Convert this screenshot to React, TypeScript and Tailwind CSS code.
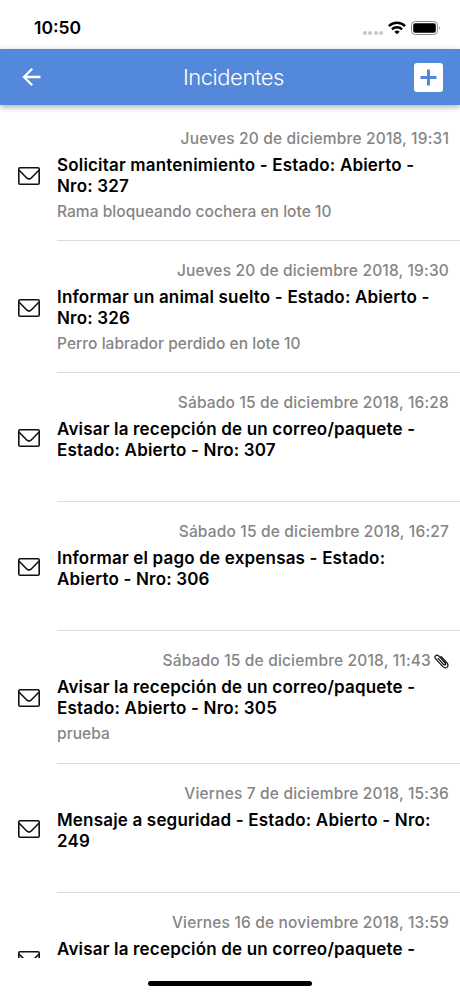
type Incident = {
  date: string;
  title: string[];
  detail?: string;
  attachment?: boolean;
  height: string;
};

const incidents: Incident[] = [
  {
    date: 'Jueves 20 de diciembre 2018, 19:31',
    title: ['Solicitar mantenimiento - Estado: Abierto -', 'Nro: 327'],
    detail: 'Rama bloqueando cochera en lote 10',
    height: 'h-[132px]',
  },
  {
    date: 'Jueves 20 de diciembre 2018, 19:30',
    title: ['Informar un animal suelto - Estado: Abierto -', 'Nro: 326'],
    detail: 'Perro labrador perdido en lote 10',
    height: 'h-[132px]',
  },
  {
    date: 'Sábado 15 de diciembre 2018, 16:28',
    title: ['Avisar la recepción de un correo/paquete -', 'Estado: Abierto - Nro: 307'],
    height: 'h-[129px]',
  },
  {
    date: 'Sábado 15 de diciembre 2018, 16:27',
    title: ['Informar el pago de expensas - Estado:', 'Abierto - Nro: 306'],
    height: 'h-[129px]',
  },
  {
    date: 'Sábado 15 de diciembre 2018, 11:43',
    title: ['Avisar la recepción de un correo/paquete -', 'Estado: Abierto - Nro: 305'],
    detail: 'prueba',
    attachment: true,
    height: 'h-[133px]',
  },
  {
    date: 'Viernes 7 de diciembre 2018, 15:36',
    title: ['Mensaje a seguridad - Estado: Abierto - Nro:', '249'],
    height: 'h-[129px]',
  },
  {
    date: 'Viernes 16 de noviembre 2018, 13:59',
    title: ['Avisar la recepción de un correo/paquete -'],
    height: 'h-[133px]',
  },
];

const MailIcon = () => (
  <svg width="22" height="18" viewBox="0 0 22 18" fill="none" stroke="#111" strokeWidth="1.6" strokeLinejoin="round">
    <rect x="0.8" y="0.8" width="20.4" height="16.4" rx="1.3" />
    <path d="M1.2 3.2 9 11.2q2 1.7 4 0L20.8 3.2" />
  </svg>
);

const ClipIcon = () => (
  <svg width="15" height="16" viewBox="0 0 15 16" fill="none" stroke="#111" strokeWidth="1.25" strokeLinecap="round">
    <path d="M4.1 5.3 9.5 11.3c1.4 1.4 2.9.1 1.7-1.3L4.9 3.1C2.6.8-.5 3.4 1.7 5.9l6.9 7.5c3.3 3.2 7.3-.1 4.4-3.5L7 3.4" />
  </svg>
);

const StatusBar = () => (
  <div className="flex h-[49px] shrink-0 items-center justify-between pr-[19px] pl-[34px] pt-[7px]">
    <p className="text-[17.5px] leading-5 font-semibold">10:50</p>
    <div className="flex items-center">
      <div className="mt-[9px] mr-[5px] flex gap-[1.5px]">
        {[0, 1, 2, 3].map((dot) => (
          <span key={dot} className="h-1 w-1 rounded-full bg-[#c8c8c8]" />
        ))}
      </div>
      <svg width="18" height="14" viewBox="0 0 18 14" fill="none" stroke="#000" strokeWidth="2.4">
        <path d="M.9 5.1a11.5 11.5 0 0 1 16.2 0" />
        <path d="M3.9 8.3a7.2 7.2 0 0 1 10.2 0" />
        <path d="M9 13.3 6.3 10.7a3.9 3.9 0 0 1 5.4 0Z" fill="#000" stroke="none" />
      </svg>
      <svg className="ml-[5px]" width="30" height="14" viewBox="0 0 30 14">
        <rect x="0.5" y="0.5" width="26" height="13" rx="3.8" fill="none" stroke="#8c8c8c" />
        <rect x="2.2" y="2.2" width="22.6" height="9.6" rx="2" fill="#000" />
        <path d="M28 4.8q1.8 2.2 0 4.4Z" fill="#8c8c8c" />
      </svg>
    </div>
  </div>
);

const Header = () => (
  <header className="relative z-10 flex h-14 shrink-0 items-center justify-between bg-[#5388da] pr-[17px] pl-[22px] text-white shadow-[0_2px_6px_rgba(0,0,0,0.32)]">
    <button aria-label="Volver">
      <svg width="19" height="18" viewBox="0 0 19 18" fill="none" stroke="currentColor" strokeWidth="2.3">
        <path d="M18.5 9H2M10.2 .8 2 9l8.2 8.2" />
      </svg>
    </button>
    <h1 className="pl-3 text-[22px] leading-7 font-[350] tracking-[-0.45px]">Incidentes</h1>
    <button aria-label="Agregar">
      <svg width="29" height="29" viewBox="0 0 29 29">
        <rect width="29" height="29" rx="3" fill="#fff" />
        <path d="M14.5 6.5v16M6.5 14.5h16" stroke="#5388da" strokeWidth="3" />
      </svg>
    </button>
  </header>
);

const IncidentRow = ({ incident }: { incident: Incident }) => (
  <li className={`flex shrink-0 items-center ${incident.height}`}>
    <div className="w-[57px] shrink-0 pt-px pl-[18px]">
      <MailIcon />
    </div>
    <div className="h-full flex-1 border-b border-[#dcdcdc] pt-5 whitespace-nowrap">
      <div className="flex h-5 items-center justify-end gap-[3px] pr-[11px] text-[15.5px] font-medium tracking-[0.17px] text-[#858585]">
        <p>{incident.date}</p>
        {incident.attachment && <ClipIcon />}
      </div>
      <div className="mt-[6px] text-[17px] leading-[21px] font-semibold tracking-[0.18px] text-black">
        {incident.title.map((line) => (
          <p key={line}>{line}</p>
        ))}
      </div>
      {incident.detail && (
        <p className="mt-[5px] text-[15.5px] leading-5 font-medium tracking-[0.05px] text-[#858585]">{incident.detail}</p>
      )}
    </div>
  </li>
);

const App = () => {
  return (
    <div className="flex h-[996px] w-[460px] flex-col overflow-hidden bg-white font-['Inter',sans-serif] text-black">
      <StatusBar />
      <Header />
      <ul className="flex min-h-0 flex-1 flex-col overflow-hidden pt-1">
        {incidents.map((incident) => (
          <IncidentRow key={incident.date} incident={incident} />
        ))}
      </ul>
      <div className="flex h-[38px] shrink-0 justify-center pt-[23px]">
        <div className="h-[5px] w-[164px] rounded-full bg-black" />
      </div>
    </div>
  );
};

export default App;
